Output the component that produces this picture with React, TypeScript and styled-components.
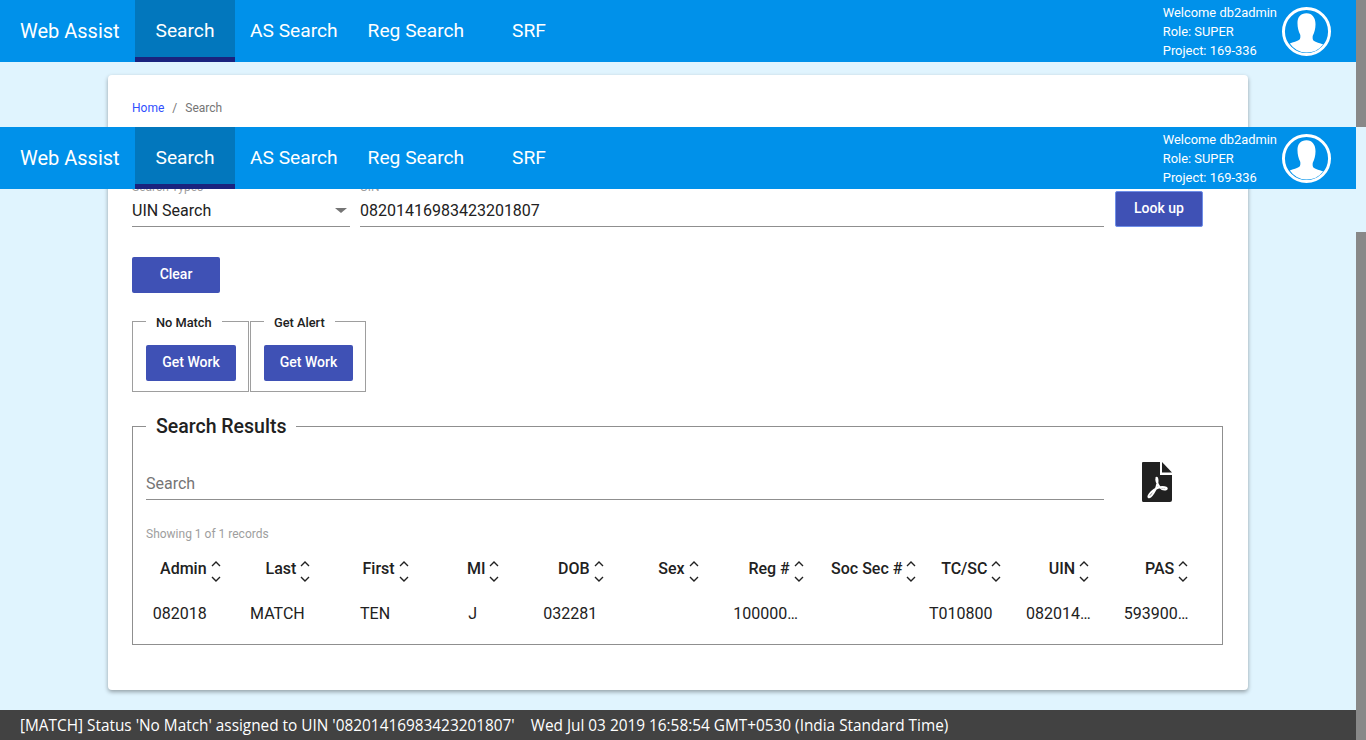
import React from "react";
import styled, { createGlobalStyle } from "styled-components";

const GlobalStyle = createGlobalStyle`
  html, body {
    margin: 0;
    padding: 0;
    height: 740px;
    overflow: hidden;
    background: #e0f4fe;
    font-family: Roboto, "Liberation Sans", sans-serif;
  }
`;

const NAV_ITEMS = ["AS Search", "Reg Search"];

const COLUMNS = [
  { title: "Admin", value: "082018" },
  { title: "Last", value: "MATCH" },
  { title: "First", value: "TEN" },
  { title: "MI", value: "J" },
  { title: "DOB", value: "032281" },
  { title: "Sex", value: "" },
  { title: "Reg #", value: "100000…" },
  { title: "Soc Sec #", value: "" },
  { title: "TC/SC", value: "T010800" },
  { title: "UIN", value: "082014…" },
  { title: "PAS", value: "593900…" },
];

const Header = () => (
  <>
    <Brand>Web Assist</Brand>
    <ActiveTab>Search</ActiveTab>
    {NAV_ITEMS.map((item) => (
      <NavTab key={item}>{item}</NavTab>
    ))}
    <SrfTab>SRF</SrfTab>
    <UserBlock>
      <UserText>
        <div>Welcome db2admin</div>
        <div>Role: SUPER</div>
        <div>Project: 169-336</div>
      </UserText>
      <svg width="49" height="49" viewBox="0 0 50 50">
        <circle cx="25" cy="25" r="23.5" fill="none" stroke="#fff" strokeWidth="3" />
        <path
          d="M25 6.500c-6 0-9.200 4-9.200 10 0 4.500 1.200 8.500 2.700 11.500 .5 1.500 .3 4.500-.8 5.500-2 1.500-6.500 2.500-9.700 3.700A21.500 21.500 0 0 0 25 46.500a21.500 21.500 0 0 0 17-8.300c-3.200-1.200-7.700-2.200-9.700-3.700-1.100-1-1.300-4-.8-5.500 1.500-3 2.700-7 2.700-11.500 0-6-3.200-11-9.200-11z"
          fill="#fff"
        />
      </svg>
    </UserBlock>
  </>
);

const SortIcon = () => (
  <SortArrows width="12" height="24" viewBox="0 0 12 24">
    <path d="M2 7l4-4 4 4" fill="none" stroke="#212121" strokeWidth="1.400" />
    <path d="M2 18l4 4 4-4" fill="none" stroke="#212121" strokeWidth="1.400" />
  </SortArrows>
);

const PdfIcon = () => (
  <svg width="30" height="40" viewBox="0 0 30 40">
    <path d="M1 0h17v13h12v25a2 2 0 0 1-2 2H1.500A1.500 1.500 0 0 1 0 38.500V1a1 1 0 0 1 1-1z" fill="#212121" />
    <path d="M20 0l10 10.500H20z" fill="#212121" />
    <path
      d="M14.500 16c-1 3 1 6 3 9 2 2 5 3 7 2 1-1-1-2-4-2-4 0-8 2-11 5-2 2-3.500 4-3 5 1 1 3-1 5-4 2-3 4-8 4-12 0-3-1-4-1-3z"
      fill="none"
      stroke="#fff"
      strokeWidth="2"
    />
  </svg>
);

const App = () => (
  <>
    <GlobalStyle />
    <Page>
      <TopBar>
        <Header />
      </TopBar>
      <Card>
        <Breadcrumb>
          <a>Home</a>
          <Separator>/</Separator>
          <span>Search</span>
        </Breadcrumb>
        <SearchRow>
          <SelectField>
            <FieldLabel>Search Types</FieldLabel>
            <FieldValue>UIN Search</FieldValue>
            <Caret />
          </SelectField>
          <UinField>
            <FieldLabel>UIN</FieldLabel>
            <FieldValue>08201416983423201807</FieldValue>
          </UinField>
          <LookupButton>Look up</LookupButton>
        </SearchRow>
        <ClearButton>Clear</ClearButton>
        <WorkRow>
          <WorkSet>
            <WorkLegend>No Match</WorkLegend>
            <WorkButton>Get Work</WorkButton>
          </WorkSet>
          <WorkSet $narrow>
            <WorkLegend>Get Alert</WorkLegend>
            <WorkButton $narrow>Get Work</WorkButton>
          </WorkSet>
        </WorkRow>
        <ResultSet>
          <ResultLegend>Search Results</ResultLegend>
          <FilterRow>
            <FilterInput>Search</FilterInput>
            <PdfIcon />
          </FilterRow>
          <Showing>Showing 1 of 1 records</Showing>
          <ResultTable>
            <thead>
              <tr>
                {COLUMNS.map((col) => (
                  <HeadCell key={col.title}>
                    <HeadInner>
                      {col.title}
                      <SortIcon />
                    </HeadInner>
                  </HeadCell>
                ))}
              </tr>
            </thead>
            <tbody>
              <tr>
                {COLUMNS.map((col) => (
                  <BodyCell key={col.title}>{col.value}</BodyCell>
                ))}
              </tr>
            </tbody>
          </ResultTable>
        </ResultSet>
      </Card>
      <StickyBar>
        <Header />
      </StickyBar>
      <StatusBar>
        <span>[MATCH] Status 'No Match' assigned to UIN '08201416983423201807'</span>
        <span>Wed Jul 03 2019 16:58:54 GMT+0530 (India Standard Time)</span>
      </StatusBar>
      <ScrollThumbTop />
      <ScrollThumbBottom />
    </Page>
  </>
);

export default App;

const Page = styled.div`
  position: relative;
  width: 1366px;
  height: 740px;
  overflow: hidden;
  background: #e0f4fe;
`;

const TopBar = styled.header`
  display: flex;
  align-items: stretch;
  width: 1356px;
  height: 62px;
  background: #0091ea;
  color: #fff;
`;

const StickyBar = styled(TopBar)`
  position: absolute;
  top: 127px;
  left: 0;
`;

const Brand = styled.div`
  width: 135px;
  padding-left: 20px;
  box-sizing: border-box;
  font-size: 20px;
  line-height: 62px;
`;

const NavTab = styled.div`
  padding: 0 15px;
  font-size: 19.2px;
  line-height: 61px;
`;

const ActiveTab = styled(NavTab)`
  width: 100px;
  padding: 0;
  box-sizing: border-box;
  text-align: center;
  background: #0277bd;
  border-bottom: 5px solid #1a237e;
`;

const SrfTab = styled(NavTab)`
  padding-left: 33px;
`;

const UserBlock = styled.div`
  display: flex;
  align-items: center;
  gap: 5px;
  margin-left: auto;
  padding-right: 25px;
`;

const UserText = styled.div`
  font-size: 12.9px;
  line-height: 19px;
`;

const Card = styled.main`
  width: 1140px;
  height: 615px;
  margin: 13px 0 0 108px;
  padding: 26px 24px 0;
  box-sizing: border-box;
  background: #fff;
  border-radius: 4px;
  box-shadow: 0 2px 4px rgba(0, 0, 0, 0.35);
`;

const Breadcrumb = styled.nav`
  display: flex;
  font-size: 12px;
  line-height: 14px;
  color: #757575;

  a {
    color: #304ffe;
  }
`;

const Separator = styled.span`
  margin: 0 8px;
`;

const SearchRow = styled.div`
  display: flex;
  align-items: flex-start;
  margin-top: 65px;
  height: 47px;
`;

const SelectField = styled.div`
  position: relative;
  width: 218px;
  height: 47px;
  box-sizing: border-box;
  border-bottom: 1px solid #8f8f8f;
`;

const UinField = styled(SelectField)`
  width: 744px;
  margin-left: 10px;
`;

const FieldLabel = styled.div`
  font-size: 12px;
  line-height: 14px;
  color: #9e9e9e;
`;

const FieldValue = styled.div`
  margin-top: 6px;
  font-size: 16px;
  line-height: 22px;
  color: #212121;
`;

const Caret = styled.span`
  position: absolute;
  right: 3px;
  top: 28px;
  border-left: 6px solid transparent;
  border-right: 6px solid transparent;
  border-top: 5px solid #757575;
`;

const ActionButton = styled.button`
  display: block;
  padding: 0 0 2px;
  border: 0;
  border-radius: 2px;
  background: #3f51b5;
  color: #fff;
  font-family: inherit;
  font-size: 14px;
  font-weight: 500;
`;

const LookupButton = styled(ActionButton)`
  width: 88px;
  height: 36px;
  margin: 11px 0 0 11px;
  box-sizing: border-box;
  border: 1px solid #6f8fe8;
`;

const ClearButton = styled(ActionButton)`
  width: 88px;
  height: 36px;
  margin-top: 30px;
`;

const WorkRow = styled.div`
  display: flex;
  gap: 1px;
  margin-top: 19px;
`;

const WorkSet = styled.fieldset<{ $narrow?: boolean }>`
  width: ${(props) => (props.$narrow ? "116px" : "117px")};
  min-width: 0;
  height: 80px;
  margin: 0;
  padding: 15px 0 0 13px;
  box-sizing: border-box;
  border: 1px solid #9e9e9e;
`;

const WorkLegend = styled.legend`
  padding: 4px 10px 0;
  font-size: 12.8px;
  font-weight: 500;
  line-height: 14px;
  color: #212121;
`;

const WorkButton = styled(ActionButton)<{ $narrow?: boolean }>`
  width: ${(props) => (props.$narrow ? "89px" : "90px")};
  height: 36px;
`;

const ResultSet = styled.fieldset`
  width: 1091px;
  height: 232px;
  margin: 21px 0 0;
  padding: 0 13px;
  box-sizing: border-box;
  border: 1px solid #8f8f8f;
`;

const ResultLegend = styled.legend`
  padding: 2px 10px 0;
  font-size: 19.5px;
  font-weight: 500;
  line-height: 24px;
  color: #212121;
`;

const FilterRow = styled.div`
  display: flex;
  align-items: flex-start;
  height: 40px;
  margin-top: 23px;
`;

const FilterInput = styled.div`
  width: 958px;
  height: 27px;
  box-sizing: border-box;
  margin-top: 11px;
  margin-right: 38px;
  border-bottom: 1px solid #8f8f8f;
  font-size: 16px;
  line-height: 22px;
  color: #757575;
`;

const Showing = styled.div`
  margin-top: 25px;
  font-size: 12px;
  line-height: 14px;
  color: #9e9e9e;
`;

const ResultTable = styled.table`
  width: 1074px;
  margin: 12px 0 0 -15px;
  table-layout: fixed;
  border-collapse: collapse;
`;

const HeadCell = styled.th`
  padding: 0 0 0 22px;
  font-size: 16px;
  font-weight: 500;
  color: #212121;
`;

const HeadInner = styled.div`
  display: flex;
  align-items: center;
  justify-content: center;
  gap: 3px;
  height: 30px;
  white-space: nowrap;
`;

const SortArrows = styled.svg`
  flex: none;
  margin-top: 6px;
`;

const BodyCell = styled.td`
  padding: 21px 0 0;
  font-size: 16px;
  line-height: 20px;
  text-align: center;
  color: #212121;
`;

const StatusBar = styled.footer`
  position: absolute;
  left: 0;
  right: 10px;
  bottom: 0;
  display: flex;
  gap: 16px;
  height: 30px;
  padding-left: 20px;
  background: #424242;
  color: #fff;
  font-family: "Open Sans", sans-serif;
  font-size: 15.36px;
  line-height: 31px;
`;

const ScrollThumbTop = styled.div`
  position: absolute;
  top: 0;
  right: 0;
  width: 10px;
  height: 127px;
  background: #888;
`;

const ScrollThumbBottom = styled(ScrollThumbTop)`
  top: 232px;
  height: 508px;
`;
